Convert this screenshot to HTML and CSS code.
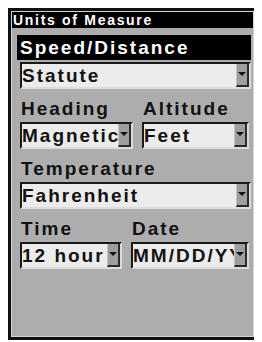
FILE: index.html
```html
<!DOCTYPE html>
<html lang="en">
<head>
    <meta charset="UTF-8">
    <title>Units of Measure</title>
    <link rel="stylesheet" href="styles.css">
</head>
<body>
    <div class="screen">
        <div class="title">Units of Measure</div>

        <div class="content">
            <div class="label selected">Speed/Distance</div>
            <div class="select wide"><span class="value">Statute</span><span class="arrow"></span></div>

            <div class="row heading-row">
                <div class="col">
                    <div class="label">Heading</div>
                    <div class="select"><span class="value">Magnetic</span><span class="arrow"></span></div>
                </div>
                <div class="col">
                    <div class="label">Altitude</div>
                    <div class="select"><span class="value">Feet</span><span class="arrow"></span></div>
                </div>
            </div>

            <div class="label">Temperature</div>
            <div class="select wide"><span class="value">Fahrenheit</span><span class="arrow"></span></div>

            <div class="row time-row">
                <div class="col">
                    <div class="label">Time</div>
                    <div class="select"><span class="value">12 hour</span><span class="arrow"></span></div>
                </div>
                <div class="col">
                    <div class="label">Date</div>
                    <div class="select"><span class="value">MM/DD/YY</span><span class="arrow"></span></div>
                </div>
            </div>
        </div>
    </div>
</body>
</html>
```

FILE: styles.css
```css
/* Page */
body {
    margin: 8px;
    background: #ffffff;
    font-family: 'Liberation Sans', Arial, sans-serif;
}

/* Outer screen frame */
.screen {
    width: 249px;
    height: 332px;
    box-sizing: border-box;
    border: 3px solid #111111;
    padding: 1px;
    background: #adadad;
    box-shadow: inset 0 0 0 1px #d4d4d4;
}

.title {
    background: #000000;
    color: #ffffff;
    font-size: 14px;
    font-weight: bold;
    letter-spacing: 1.7px;
    height: 16px;
    line-height: 16px;
    padding-left: 1px;
    white-space: nowrap;
}

.content {
    padding: 7px 2px 0 5px;
}

/* Labels */
.label {
    font-size: 19px;
    font-weight: bold;
    letter-spacing: 2px;
    color: #111111;
    height: 25px;
    line-height: 23px;
    padding-left: 4px;
    white-space: nowrap;
}

.label.selected {
    background: #000000;
    color: #ffffff;
    height: 25px;
    line-height: 25px;
    padding-left: 3px;
    margin-bottom: 2px;
}

/* Dropdown boxes */
.select {
    display: flex;
    height: 27px;
    box-sizing: border-box;
    margin-bottom: 8px;
    border: 2px solid;
    border-color: #1a1a1a #dcdcdc #dcdcdc #1a1a1a;
    background: #ececec;
}

.select.wide {
    margin-left: 3px;
}

.value {
    flex: 1;
    overflow: hidden;
    white-space: nowrap;
    font-size: 19px;
    font-weight: bold;
    letter-spacing: 2px;
    line-height: 23px;
    color: #111111;
}

.arrow {
    position: relative;
    flex: none;
    width: 10px;
    background: #9e9e9e;
    border-left: 1px solid #c4c4c4;
    border-right: 2px solid #2a2a2a;
    border-bottom: 2px solid #2a2a2a;
}

.arrow::after {
    content: "";
    position: absolute;
    left: 1px;
    top: 8px;
    border-left: 4px solid transparent;
    border-right: 4px solid transparent;
    border-top: 4px solid #111111;
}

/* Two-column rows */
.row {
    display: grid;
    column-gap: 9px;
    margin-left: 3px;
}

.heading-row {
    grid-template-columns: 113px 107px;
}

.time-row {
    grid-template-columns: 102px 118px;
}

.row .label {
    padding-left: 1px;
}
```
